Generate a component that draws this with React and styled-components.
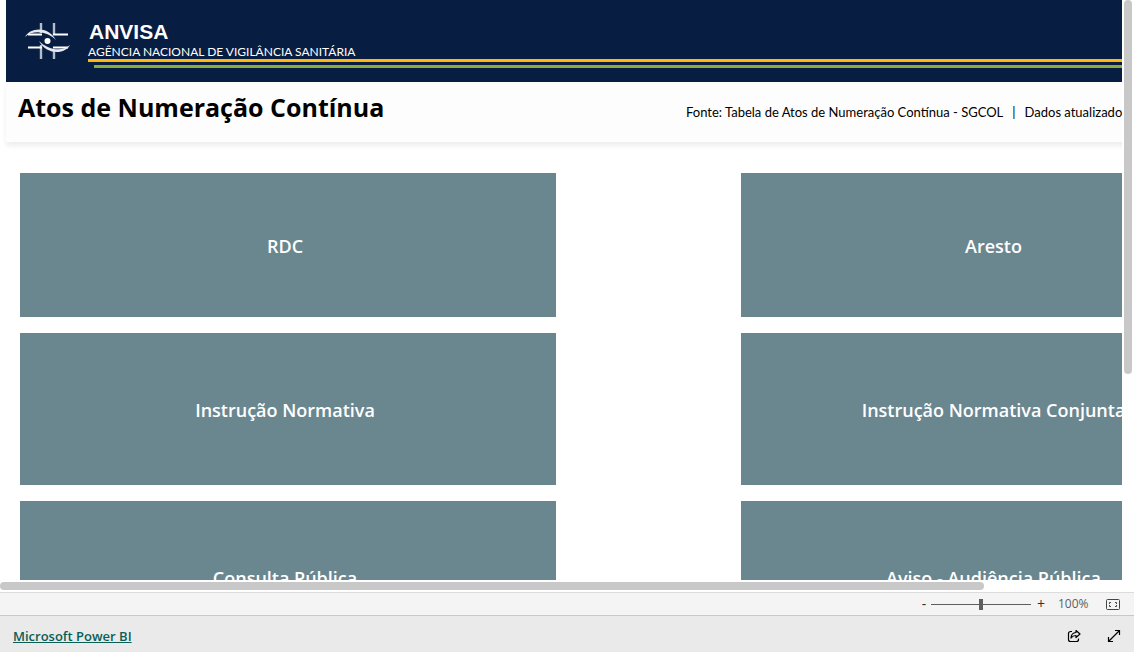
import React, { useState } from 'react';
import styled, { createGlobalStyle } from 'styled-components';

const GlobalStyle = createGlobalStyle`
  * {
    box-sizing: border-box;
  }

  body {
    margin: 0;
    background: #fff;
    font-family: 'Open Sans', 'Noto Sans', sans-serif;
  }
`;

const Page = styled.div`
  display: flex;
  flex-direction: column;
  height: 100vh;
  overflow: hidden;
`;

const Viewer = styled.main`
  flex: 1;
  min-height: 0;
  display: grid;
  grid-template-columns: minmax(0, 1fr) 12px;
  grid-template-rows: minmax(0, 1fr) 12px;
`;

const Report = styled.div`
  overflow: hidden;
  padding-left: 6px;
`;

const Canvas = styled.div`
  width: 1264px;
`;

const VerticalTrack = styled.div`
  padding: 0 2px 4px;
`;

const HorizontalTrack = styled.div`
  padding: 2px 4px 2px 0;
`;

const Thumb = styled.div`
  background: #c8c8c8;
  border-radius: 4px;
  width: ${({ $vertical }) => ($vertical ? '8px' : '88%')};
  height: ${({ $vertical }) => ($vertical ? '65%' : '8px')};
`;

const Banner = styled.header`
  display: flex;
  height: 82px;
  padding: 20px 0 0 18px;
  background: #071d41;
  color: #fff;
`;

const Logo = styled.svg`
  flex: none;
  width: 48px;
  height: 42px;
  margin-right: 16px;
`;

const Brand = styled.div`
  flex: 1;
`;

const BrandName = styled.div`
  padding-left: 1px;
  font: bold 21px/24px 'Liberation Sans', Arial, sans-serif;
`;

const BrandText = styled.div`
  font: 12px/15px Lato, 'Open Sans', sans-serif;
`;

const Stripe = styled.div`
  height: 3px;
  margin: 0 0 3px ${({ $indent }) => ($indent ? '6px' : '0')};
  background: ${({ $color }) => $color};
`;

const TitleBar = styled.div`
  display: flex;
  align-items: flex-start;
  justify-content: space-between;
  height: 60px;
  padding: 8px 0 0 12px;
  background: #fdfdfd;
  box-shadow: 0 4px 5px rgba(0, 0, 0, 0.07);
`;

const Title = styled.h1`
  margin: 0;
  font-size: 25px;
  line-height: 34px;
  font-weight: 700;
  color: #000;
`;

const Source = styled.p`
  flex: none;
  display: flex;
  gap: 9px;
  width: 584px;
  margin: 12px 0 0;
  font: 13px/20px Lato, 'Open Sans', sans-serif;
  color: #000;
  white-space: nowrap;
`;

const Acts = styled.nav`
  display: grid;
  grid-template-columns: 536px 511px;
  grid-template-rows: 144px 152px 152px;
  column-gap: 185px;
  row-gap: 16px;
  padding: 31px 0 0 14px;
`;

const ActButton = styled.button`
  border: 0;
  padding: 2px 6px 0 0;
  background: #6a8790;
  color: #fff;
  font: 600 18px/24px 'Open Sans', 'Noto Sans', sans-serif;
  cursor: pointer;

  &:hover {
    background: #5e7a83;
  }
`;

const ZoomBar = styled.div`
  display: flex;
  align-items: center;
  justify-content: flex-end;
  height: 23px;
  padding-right: 14px;
  border-top: 1px solid #dcdcdc;
  background: #f4f4f4;
  color: #605e5c;
`;

const ZoomButton = styled.button`
  width: 14px;
  height: 20px;
  border: 0;
  padding: 0;
  background: none;
  color: #323130;
  font: 14px/20px 'Open Sans', sans-serif;
  cursor: pointer;
`;

const ZoomSlider = styled.input`
  appearance: none;
  width: 100px;
  height: 12px;
  margin: 0 3px 0 0;
  background: none;

  &::-webkit-slider-runnable-track {
    height: 1px;
    background: #605e5c;
  }

  &::-webkit-slider-thumb {
    appearance: none;
    width: 4px;
    height: 11px;
    margin-top: -5px;
    background: #605e5c;
  }
`;

const ZoomValue = styled.output`
  width: 58px;
  padding-left: 10px;
  font-size: 12px;
  line-height: 20px;
`;

const IconButton = styled.button`
  display: flex;
  border: 0;
  padding: 0;
  background: none;
  color: inherit;
  cursor: pointer;
`;

const Footer = styled.footer`
  display: flex;
  align-items: center;
  justify-content: space-between;
  height: 37px;
  padding: 4px 13px 0;
  border-top: 1px solid #c8c8c8;
  background: #eaeaea;
  color: #000;
`;

const BrandLink = styled.a`
  color: #0b5e55;
  font-size: 13px;
  line-height: 20px;
  font-weight: 600;
`;

const FooterActions = styled.div`
  display: flex;
  gap: 26px;
`;

const acts = [
  'RDC',
  'Aresto',
  'Instrução Normativa',
  'Instrução Normativa Conjunta',
  'Consulta Pública',
  'Aviso - Audiência Pública',
];

const AnvisaLogo = () => (
  <Logo viewBox="0 0 48 42" fill="none" aria-hidden="true">
    <g stroke="#b4bccb" strokeWidth="2.4">
      <path d="M17 3v10M30 3v12M17 25v14M30 30v9" />
    </g>
    <g stroke="#fff" strokeWidth="2">
      <path d="M4 14.5h14M29 14.5h15M4 27.5h14M29 27.5h15" />
    </g>
    <path d="M1 17C5 8 24 5 32 20C24 12 10 9 1 17Z" fill="#e6e9ee" />
    <path d="M46 25C42 34 23 36 15 21C23 29 37 33 46 25Z" fill="#e6e9ee" />
    <circle cx="23.5" cy="21" r="3" fill="#fff" />
  </Logo>
);

const FitIcon = () => (
  <svg width="14" height="11" viewBox="0 0 14 11" fill="none" stroke="#484644">
    <rect x="0.5" y="0.5" width="13" height="10" rx="1" />
    <path d="M5 3.500H3.500V5M9 3.500h1.500V5M5 7.500H3.500V6M9 7.500h1.500V6" />
  </svg>
);

const ShareIcon = () => (
  <svg width="14" height="14" viewBox="0 0 14 14" fill="none" stroke="currentColor" strokeWidth="1.2" strokeLinejoin="round">
    <path d="M5 2.500H3.500a2 2 0 0 0-2 2V10.500a2 2 0 0 0 2 2h6a2 2 0 0 0 2-2V9.500" />
    <path d="M9 1.500L13 5L9 8.500V6.500C6.800 6.500 5.300 7.200 4 9C4.200 5.800 5.900 3.700 9 3.500Z" />
  </svg>
);

const ExpandIcon = () => (
  <svg width="14" height="14" viewBox="0 0 14 14" fill="none" stroke="currentColor" strokeWidth="1.2">
    <path d="M1.500 12.500L12.500 1.500M8 1.500h4.500V6M1.500 8v4.500H6" />
  </svg>
);

const App = () => {
  const [zoom, setZoom] = useState(100);

  return (
    <Page>
      <GlobalStyle />
      <Viewer>
        <Report>
          <Canvas>
            <Banner>
              <AnvisaLogo />
              <Brand>
                <BrandName>ANVISA</BrandName>
                <BrandText>AGÊNCIA NACIONAL DE VIGILÂNCIA SANITÁRIA</BrandText>
                <Stripe $color="#ffb80e" />
                <Stripe $color="#8bac36" $indent />
              </Brand>
            </Banner>
            <TitleBar>
              <Title>Atos de Numeração Contínua</Title>
              <Source>
                <span>Fonte: Tabela de Atos de Numeração Contínua - SGCOL</span>
                <span>|</span>
                <span>Dados atualizados</span>
              </Source>
            </TitleBar>
            <Acts>
              {acts.map((act) => (
                <ActButton key={act} type="button">{act}</ActButton>
              ))}
            </Acts>
          </Canvas>
        </Report>
        <VerticalTrack>
          <Thumb $vertical />
        </VerticalTrack>
        <HorizontalTrack>
          <Thumb />
        </HorizontalTrack>
      </Viewer>
      <ZoomBar>
        <ZoomButton type="button" aria-label="Reduzir" onClick={() => setZoom(Math.max(0, zoom - 10))}>-</ZoomButton>
        <ZoomSlider
          type="range"
          min="0"
          max="200"
          aria-label="Zoom"
          value={zoom}
          onChange={(e) => setZoom(Number(e.target.value))}
        />
        <ZoomButton type="button" aria-label="Ampliar" onClick={() => setZoom(Math.min(200, zoom + 10))}>+</ZoomButton>
        <ZoomValue>{zoom}%</ZoomValue>
        <IconButton type="button" aria-label="Ajustar à página">
          <FitIcon />
        </IconButton>
      </ZoomBar>
      <Footer>
        <BrandLink href="#">Microsoft Power BI</BrandLink>
        <FooterActions>
          <IconButton type="button" aria-label="Compartilhar">
            <ShareIcon />
          </IconButton>
          <IconButton type="button" aria-label="Tela inteira">
            <ExpandIcon />
          </IconButton>
        </FooterActions>
      </Footer>
    </Page>
  );
};

export default App;
